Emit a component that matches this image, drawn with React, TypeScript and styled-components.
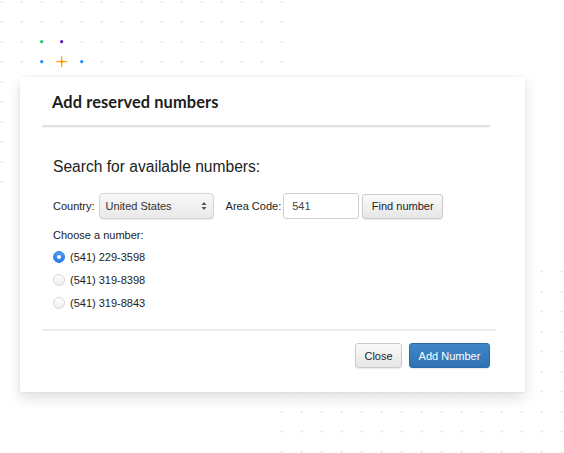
import React from "react";
import styled, { createGlobalStyle } from "styled-components";

const Global = createGlobalStyle`
  html, body { margin: 0; padding: 0; background: #ffffff; }
  body { font-family: "Liberation Sans", Arial, Helvetica, sans-serif; color: #222; }
  * { box-sizing: border-box; }
`;

const Page = styled.div`
  position: relative;
  width: 564px;
  height: 453px;
  overflow: hidden;
  padding: 77px 0 0 20px;
`;

const Dots = styled.svg<{ $x: number; $y: number }>`
  position: absolute;
  left: ${(p) => p.$x}px;
  top: ${(p) => p.$y}px;
  pointer-events: none;
`;

const Modal = styled.div`
  position: relative;
  width: 505px;
  height: 315px;
  background: #fff;
  border-radius: 2px;
  box-shadow: 0 6px 14px rgba(0, 0, 0, 0.13), 0 0 3px rgba(0, 0, 0, 0.06);
  display: flex;
  flex-direction: column;
`;

const Header = styled.div`
  margin: 0 35px 0 22px;
  padding: 15px 0 13px 10px;
  border-bottom: 2px solid #e2e2e2;
  box-shadow: 0 1px 0 rgba(0, 0, 0, 0.03);
`;

const Title = styled.h2`
  margin: 0;
  font-family: "Lato", "Open Sans", sans-serif;
  font-weight: 700;
  font-size: 16.4px;
  line-height: 20px;
  color: #1d1d1d;
  letter-spacing: 0.1px;
`;

const Body = styled.div`
  padding: 30px 0 0 33px;
  flex: 1;
`;

const Heading = styled.div`
  font-size: 15.6px;
  line-height: 20px;
  color: #222;
  margin-bottom: 16px;
`;

const FormRow = styled.div`
  display: flex;
  align-items: center;
  font-size: 11px;
  height: 26px;
`;

const Label = styled.span<{ $gap?: number }>`
  margin-right: ${(p) => p.$gap ?? 4}px;
  color: #222;
`;

const Select = styled.div`
  width: 115px;
  height: 26px;
  border: 1px solid #d4d4d4;
  border-radius: 4px;
  background: linear-gradient(#f8f8f8, #e9e9e9);
  box-shadow: 0 1px 1px rgba(0, 0, 0, 0.08);
  display: flex;
  align-items: center;
  justify-content: space-between;
  padding: 0 6px 0 6px;
  margin-right: 12px;
  color: #333;
`;

const Input = styled.div`
  width: 76px;
  height: 26px;
  border: 1px solid #cfcfcf;
  border-radius: 3px;
  background: #fff;
  display: flex;
  align-items: center;
  padding-left: 8px;
  margin-right: 3px;
  color: #444;
`;

const Button = styled.button<{ $primary?: boolean; $w: number }>`
  width: ${(p) => p.$w}px;
  height: 25px;
  padding: 0;
  font-family: "Liberation Sans", Arial, sans-serif;
  font-size: 11px;
  border-radius: 3px;
  cursor: pointer;
  border: 1px solid ${(p) => (p.$primary ? "#2a6aa6" : "#cbcbcb")};
  color: ${(p) => (p.$primary ? "#fff" : "#222")};
  background: ${(p) =>
    p.$primary
      ? "linear-gradient(#3f87c8, #2f72b2)"
      : "linear-gradient(#fafafa, #e6e6e6)"};
  box-shadow: 0 1px 1px rgba(0, 0, 0, 0.08);
`;

const Choose = styled.div`
  font-size: 11px;
  margin-top: 9px;
  line-height: 14px;
`;

const Options = styled.div`
  display: flex;
  flex-direction: column;
  gap: 9px;
  margin-top: 8px;
`;

const Option = styled.label`
  display: flex;
  align-items: center;
  gap: 5px;
  font-size: 11px;
  line-height: 14px;
  color: #222;
`;

const Radio = styled.span<{ $on?: boolean }>`
  width: 12px;
  height: 12px;
  border-radius: 50%;
  display: flex;
  align-items: center;
  justify-content: center;
  border: 1px solid ${(p) => (p.$on ? "#2f7fe6" : "#d6d6d6")};
  background: ${(p) =>
    p.$on ? "linear-gradient(#4c9af5, #2d7ce8)" : "linear-gradient(#ffffff, #efefef)"};
  &::after {
    content: "";
    width: 4px;
    height: 4px;
    border-radius: 50%;
    background: #fff;
    display: ${(p) => (p.$on ? "block" : "none")};
  }
`;

const Footer = styled.div`
  margin: auto 29px 0 22px;
  border-top: 2px solid #ececec;
  padding: 12px 6px 24px 0;
  display: flex;
  justify-content: flex-end;
  gap: 7px;
`;

function DotPatch({ x, y, w, h, ox, oy }: { x: number; y: number; w: number; h: number; ox: number; oy: number }) {
  const dots: React.ReactNode[] = [];
  for (let cx = ox; cx < w; cx += 20) {
    for (let cy = oy; cy < h; cy += 20) {
      dots.push(<circle key={`${cx}-${cy}`} cx={cx} cy={cy} r={1} fill="#e1e1e1" />);
    }
  }
  return (
    <Dots $x={x} $y={y} width={w} height={h}>
      {dots}
    </Dots>
  );
}

export default function App() {
  return (
    <>
      <Global />
      <Page>
        <DotPatch x={0} y={0} w={290} h={190} ox={1.7} oy={1.7} />
        <DotPatch x={270} y={260} w={294} h={193} ox={11.7} oy={11.7} />
        <Dots $x={30} $y={30} width={70} height={45}>
          <circle cx={11.7} cy={11.7} r={1.6} fill="#22c55e" />
          <circle cx={31.7} cy={11.7} r={1.6} fill="#5b21b6" />
          <circle cx={11.7} cy={31.7} r={1.6} fill="#1e90ff" />
          <circle cx={51.7} cy={31.7} r={1.6} fill="#1e90ff" />
          <g stroke="#f5a623" strokeWidth={1.3} strokeLinecap="round">
            <line x1={31.7} y1={26.7} x2={31.7} y2={36.7} />
            <line x1={26.7} y1={31.7} x2={36.7} y2={31.7} />
          </g>
          <circle cx={31.7} cy={31.7} r={1.6} fill="#f59e0b" />
        </Dots>
        <Modal>
          <Header>
            <Title>Add reserved numbers</Title>
          </Header>
          <Body>
            <Heading>Search for available numbers:</Heading>
            <FormRow>
              <Label>Country:</Label>
              <Select>
                <span>United States</span>
                <svg width="6" height="10" viewBox="0 0 6 10">
                  <path d="M0.5 4 L3 1 L5.5 4 Z" fill="#555" />
                  <path d="M0.5 6 L3 9 L5.5 6 Z" fill="#555" />
                </svg>
              </Select>
              <Label $gap={2}>Area Code:</Label>
              <Input>541</Input>
              <Button $w={81}>Find number</Button>
            </FormRow>
            <Choose>Choose a number:</Choose>
            <Options>
              <Option>
                <Radio $on />
                (541) 229-3598
              </Option>
              <Option>
                <Radio />
                (541) 319-8398
              </Option>
              <Option>
                <Radio />
                (541) 319-8843
              </Option>
            </Options>
          </Body>
          <Footer>
            <Button $w={47}>Close</Button>
            <Button $primary $w={81}>Add Number</Button>
          </Footer>
        </Modal>
      </Page>
    </>
  );
}
